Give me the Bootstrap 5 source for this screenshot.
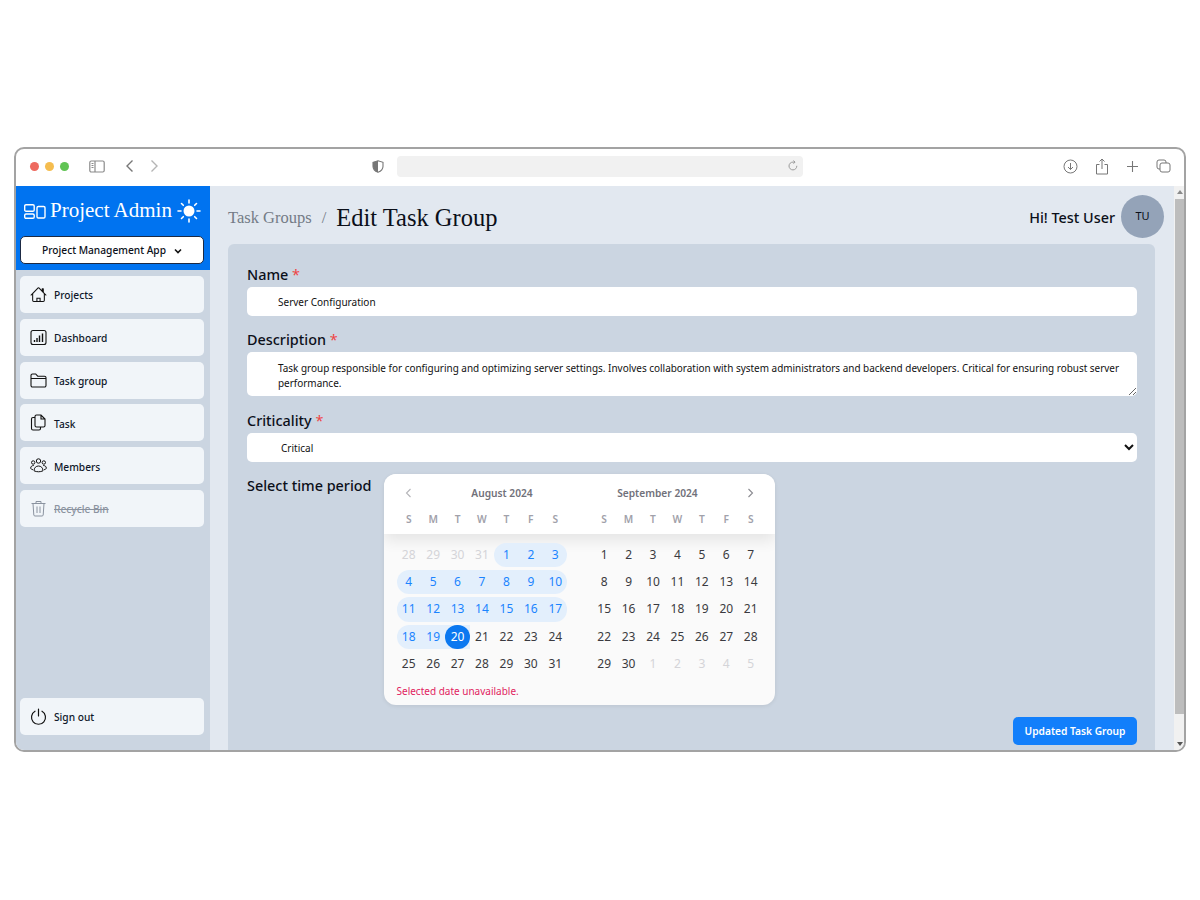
<!doctype html>
<html lang="en">
<head>
<meta charset="utf-8">
<title>Edit Task Group</title>
<link rel="stylesheet" href="https://cdn.jsdelivr.net/npm/bootstrap@5.3.0/dist/css/bootstrap.min.css">
<style>
html,body{height:100%;background:#fff;overflow:hidden}
body{font-family:"Noto Sans",Roboto,sans-serif;color:#0b0f19}
.frame{width:1172px;height:605px;margin:147px 0 0 14px;border:2px solid #a3a3a3;border-radius:10px;overflow:hidden;background:#fff}
.toolbar{height:37px;flex:none;padding:0 13px 3px 14px;color:#7a7a7a}
.dots{gap:6px}
.dots i{width:9px;height:9px;border-radius:50%;display:block}
.addr{width:406px;height:21px;background:#f1f1f1;border-radius:4px;margin-left:13px;padding-right:4px}
.tb1{margin-left:20px}.tb2{margin-left:20px}.tb3{margin-left:16px}.mid{margin-left:213px}
.app{flex:1;min-height:0}
.side{width:194px;background:#cbd5e1;flex:none}
.brand{height:84px;background:#0073f0;color:#fff;padding:0 4px}
.brand-row{height:50px;padding:0 4px;font:21px/1 "Liberation Serif",serif;white-space:nowrap}
.brand-row span{padding-bottom:2px}
.pick{height:28px;width:184px;background:#fff;color:#0b0f19;border:1px solid #1c2a44;border-radius:5px;font-size:10.200px;font-weight:500;padding-top:2px}
.navi{height:37px;background:#f1f5f9;border-radius:5px;font-size:10.200px;font-weight:500;padding-left:10px;gap:7px;color:#0f172a;width:184px}
.navi span{padding-top:3px}
.navi svg{flex:none}
.navlist{padding:6px 0 0 4px;gap:5.800px;height:465px}
.off{color:#8b93a0}.off span{text-decoration:line-through}
.mainp{background:#e2e8f0;flex:1;min-width:0;padding:0 19px 0 18px}
.topb{height:58px;padding-top:3px}
.crumb{font:16.500px/1 "Liberation Serif",serif;color:#747b86;padding-top:3px}
.sep{font:16.500px/1 "Liberation Serif",serif;color:#747b86;margin:0 10px;padding-top:3px}
.ttl{font:24.500px/1 "Liberation Serif",serif;color:#0b0f19;margin:0;padding-top:3px}
.hi{font-size:14.400px;font-weight:500;margin-right:6px;padding-top:3px}
.ava{width:43px;height:43px;border-radius:50%;background:#94a3b8;font-size:11px;margin-right:-9px}
.panel{background:#cbd5e1;border-radius:6px 6px 0 0;padding:20px 18px 0 19px;height:507px}
.lab{font-size:14.400px;font-weight:500;line-height:20px;padding-top:1px;margin-bottom:2px;display:block}
.lab b{color:#ef4444;font-weight:400}
.fld{display:block;width:100%;background:#fff;border:0;border-radius:5px;font-size:10px;color:#111;padding:0 0 0 31px;height:29px;margin-bottom:13px;outline:0}
textarea.fld{height:44px;padding:9px 14px 0 31px;line-height:15px;margin-bottom:14px;font-size:9.950px}
select.fld{padding-left:30px;margin-bottom:12px}
.tp{font-size:14.400px;font-weight:500;width:137px;line-height:20px;padding-top:2px}
.cal{width:391px;height:231px;background:#fafafa;border-radius:12px;box-shadow:0 1px 4px rgba(0,0,0,.08);overflow:hidden}
.calh{height:60px;background:#fff;box-shadow:0 6px 14px rgba(0,0,0,.09);position:relative;padding:0 12.500px;gap:24.500px}
.mon{width:171px;position:relative}
.mt{height:39px;font-size:10.200px;font-weight:600;color:#71717a}
.mt1{padding-left:40px}.mt2{padding-right:40px}
.arr{position:absolute;top:14px;color:#b4b4b8}
.gr{display:grid;grid-template-columns:repeat(7,24.430px);text-align:center}
.wd{font-size:10.200px;font-weight:600;color:#a1a1aa;line-height:15px;margin-top:-1px}
.calb{padding:8.500px 12.500px 0;gap:24.500px}
.dc{height:24.400px;margin-bottom:3px;font-size:12px;line-height:24.400px;color:#3a3a40}
.mute{color:#d4d4d8}
.rg{background:#e3effc;color:#1b84ff}
.rs{border-radius:12px 0 0 12px}.re{border-radius:0 12px 12px 0}
.sel{background:#e3effc;border-radius:0}
.sel span{display:block;height:24.400px;background:#0b78f0;color:#fff;border-radius:50%}
.err{font-size:10px;color:#e11d5f;padding:5px 0 0 12.500px;line-height:14px}
.sub{height:28px;width:124px;background:#127ffb;color:#fff;border:0;border-radius:5px;font-size:10.200px;font-weight:600;white-space:nowrap;padding-top:3px}
.scr{width:10px;flex:none;background:#f1f1f1;position:relative}
.scr:before{content:"";position:absolute;left:1px;right:0;top:13px;bottom:36px;background:#bdbdbd}
.scr i{position:absolute;left:3px;border-left:3px solid transparent;border-right:3px solid transparent}
</style>
</head>
<body>
<div class="frame d-flex flex-column">
  <div class="toolbar d-flex align-items-center">
    <div class="dots d-flex">
      <i style="background:#ee6a5f"></i><i style="background:#f5bd4f"></i><i style="background:#61c454"></i>
    </div>
    <svg class="tb1" width="16" height="13" viewBox="0 0 16 13" fill="none" stroke="#8a8a8a" stroke-width="1.2"><rect x=".8" y="1" width="14.4" height="11" rx="1.5"/><path d="M6 1v11M2.500 3.500h2M2.500 5.500h2M2.500 7.500h2"/></svg>
    <svg class="tb2" width="9" height="14" viewBox="0 0 9 14" fill="none" stroke="#777" stroke-width="1.400"><path d="M7.500 1.500 2 7l5.500 5.500"/></svg>
    <svg class="tb3" width="9" height="14" viewBox="0 0 9 14" fill="none" stroke="#b5b5b5" stroke-width="1.400"><path d="M1.500 1.500 7 7l-5.500 5.500"/></svg>
    <svg class="mid" width="12" height="13" viewBox="0 0 12 13"><path d="M6 .8 11 2.300v4C11 9.500 8.800 11.400 6 12.300 3.200 11.400 1 9.500 1 6.300v-4z" fill="#fff" stroke="#777" stroke-width="1.100"/><path d="M6 .8V12.300C3.200 11.400 1 9.500 1 6.300v-4z" fill="#777"/></svg>
    <div class="addr d-flex align-items-center justify-content-end">
      <svg width="12" height="12" viewBox="0 0 12 12" fill="none" stroke="#9a9a9a" stroke-width="1"><path d="M9.800 5.800A3.900 3.900 0 1 1 6 2.100h2M6.500.5 8 2.100 6.500 3.700"/></svg>
    </div>
    <div class="ms-auto d-flex align-items-center" style="gap:17px">
      <svg width="15" height="15" viewBox="0 0 15 15" fill="none" stroke="#777" stroke-width="1"><circle cx="7.500" cy="7.500" r="6.500"/><path d="M7.500 4v6.500M5 8l2.500 2.500L10 8"/></svg>
      <svg width="14" height="17" viewBox="0 0 14 17" fill="none" stroke="#777" stroke-width="1"><path d="M4.500 6.500H1.500v9.500h11V6.500h-3M7 11V1M4.500 3.500 7 1l2.500 2.500"/></svg>
      <svg width="13" height="13" viewBox="0 0 13 13" fill="none" stroke="#777" stroke-width="1.100"><path d="M6.500 1v11M1 6.500h11"/></svg>
      <svg width="15" height="14" viewBox="0 0 15 14" fill="none" stroke="#777" stroke-width="1"><rect x="4" y="4" width="10" height="9" rx="2"/><path d="M4 10H3a2 2 0 0 1-2-2V3a2 2 0 0 1 2-2h5a2 2 0 0 1 2 2v1"/></svg>
    </div>
  </div>
  <div class="app d-flex">
    <aside class="side d-flex flex-column">
      <div class="brand">
        <div class="brand-row d-flex align-items-center">
          <svg class="flex-shrink-0" width="22" height="15" viewBox="0 0 22 15" fill="none" stroke="#fff" stroke-width="1.400" style="margin-right:4px"><rect x=".7" y=".7" width="9.500" height="6.500" rx="1.300"/><rect x=".7" y="10" width="9.500" height="4.300" rx="1.300"/><rect x="13" y="2.500" width="8" height="11.500" rx="1.300"/></svg>
          <span>Project Admin</span>
          <svg class="ms-auto flex-shrink-0" width="24" height="24" viewBox="0 0 24 24" fill="none" stroke="#fff" stroke-width="1.600" stroke-linecap="round" style="margin-right:1px"><circle cx="12" cy="12" r="5.500" fill="#fff" stroke="none"/><path d="M12 1v3M12 20v3M1 12h3M20 12h3M4.500 4.500l1.800 1.800M17.700 17.700l1.800 1.800M4.500 19.500l1.800-1.800M17.700 6.300l1.800-1.800"/></svg>
        </div>
        <button class="pick d-flex align-items-center justify-content-center gap-2" type="button">Project Management App
          <svg width="8" height="6" viewBox="0 0 8 6" fill="none" stroke="#111" stroke-width="1.600"><path d="M1 1.500 4 4.500 7 1.500"/></svg>
        </button>
      </div>
      <nav class="navlist d-flex flex-column">
        <a class="navi d-flex align-items-center text-decoration-none"><svg width="17" height="17" viewBox="0 0 16 16" fill="#111"><path d="M8.707 1.500a1 1 0 0 0-1.414 0L.646 8.146a.5.500 0 0 0 .708.708L2 8.207V13.500A1.500 1.500 0 0 0 3.500 15h9a1.500 1.500 0 0 0 1.500-1.500V8.207l.646.647a.5.500 0 0 0 .708-.708L13 5.793V2.500a.5.500 0 0 0-.5-.5h-1a.5.500 0 0 0-.5.500v1.293L8.707 1.500ZM13 7.207V13.500a.5.500 0 0 1-.5.500h-9a.5.500 0 0 1-.5-.5V7.207l5-5 5 5ZM6 11h4v3H9v-2H7v2H6z"/></svg><span>Projects</span></a>
        <a class="navi d-flex align-items-center text-decoration-none"><svg width="17" height="17" viewBox="0 0 17 17" fill="none" stroke="#111" stroke-width="1.100"><rect x="1" y="1.500" width="15" height="14" rx="2"/><path stroke-width="1.400" d="M4.500 13v-2M7 13V9M9.500 13V6.500M12.500 13V4.500"/></svg><span>Dashboard</span></a>
        <a class="navi d-flex align-items-center text-decoration-none"><svg width="17" height="15" viewBox="0 0 17 15" fill="none" stroke="#111" stroke-width="1.100"><path d="M1 12.500V2.500A1.500 1.500 0 0 1 2.500 1h3.200l2 2.200h6.800A1.500 1.500 0 0 1 16 4.700v7.800a1.500 1.500 0 0 1-1.500 1.500h-12A1.500 1.500 0 0 1 1 12.500ZM1 5.500h15"/></svg><span>Task group</span></a>
        <a class="navi d-flex align-items-center text-decoration-none"><svg width="17" height="17" viewBox="0 0 17 17" fill="none" stroke="#111" stroke-width="1.100"><path d="M5 3.500H3A1.500 1.500 0 0 0 1.500 5v9.500A1.500 1.500 0 0 0 3 16h6a1.500 1.500 0 0 0 1.500-1.500V13"/><path d="M5 2.500A1.500 1.500 0 0 1 6.500 1H11l4 4v6.500a1.500 1.500 0 0 1-1.500 1.500h-7A1.500 1.500 0 0 1 5 11.500ZM11 1v4h4"/></svg><span>Task</span></a>
        <a class="navi d-flex align-items-center text-decoration-none"><svg width="17" height="15" viewBox="0 0 17 15" fill="none" stroke="#111" stroke-width="1"><circle cx="8.500" cy="3" r="2.200"/><circle cx="3.200" cy="4.500" r="1.700"/><circle cx="13.800" cy="4.500" r="1.700"/><path d="M4 12.800c0-3 2-4.800 4.500-4.800s4.500 1.800 4.500 4.800c-3 1.300-6 1.300-9 0ZM3.800 7.500C2 7.500.7 8.500.7 10c0 1 1 1.500 2.300 1.700M13.200 7.500c1.800 0 3.100 1 3.100 2.500 0 1-1 1.500-2.300 1.700"/></svg><span>Members</span></a>
        <a class="navi off d-flex align-items-center text-decoration-none"><svg width="17" height="17" viewBox="0 0 17 17" fill="none" stroke="#8b93a0" stroke-width="1"><path d="M1.500 3.500h14M6 3.500V1.500h5v2M3 3.500l.8 11.500a1.200 1.200 0 0 0 1.200 1h7a1.200 1.200 0 0 0 1.200-1l.8-11.500M7 6.500v6.500M10 6.500v6.500"/></svg><span>Recycle Bin</span></a>
        <a class="navi d-flex align-items-center text-decoration-none mt-auto"><svg width="17" height="17" viewBox="0 0 17 17" fill="none" stroke="#111" stroke-width="1.200" stroke-linecap="round"><path d="M8.500 1v7M5 3.200a7 7 0 1 0 7 0"/></svg><span>Sign out</span></a>
      </nav>
    </aside>
    <main class="mainp">
      <div class="topb d-flex align-items-center">
        <span class="crumb">Task Groups</span><span class="sep">/</span><h1 class="ttl">Edit Task Group</h1>
        <span class="hi ms-auto">Hi! Test User</span>
        <span class="ava d-flex align-items-center justify-content-center">TU</span>
      </div>
      <form class="panel">
        <label class="lab">Name <b>*</b></label>
        <input class="fld" type="text" value="Server Configuration">
        <label class="lab">Description <b>*</b></label>
        <textarea class="fld">Task group responsible for configuring and optimizing server settings. Involves collaboration with system administrators and backend developers. Critical for ensuring robust server performance.</textarea>
        <label class="lab">Criticality <b>*</b></label>
        <select class="fld"><option>Critical</option></select>
        <div class="d-flex">
          <div class="tp">Select time period</div>
          <div class="cal">
            <div class="calh d-flex">
              <div class="mon">
                <svg class="arr" style="left:8px" width="7" height="10" viewBox="0 0 7 10" fill="none" stroke="currentColor" stroke-width="1.100"><path d="M5.500 1 1.500 5l4 4"/></svg>
                <div class="mt mt1 d-flex align-items-center justify-content-center">August 2024</div>
                <div class="gr wd"><span>S</span><span>M</span><span>T</span><span>W</span><span>T</span><span>F</span><span>S</span></div>
              </div>
              <div class="mon">
                <svg class="arr" style="right:9px;color:#8a8a90" width="7" height="10" viewBox="0 0 7 10" fill="none" stroke="currentColor" stroke-width="1.100"><path d="M1.500 1l4 4-4 4"/></svg>
                <div class="mt mt2 d-flex align-items-center justify-content-center">September 2024</div>
                <div class="gr wd"><span>S</span><span>M</span><span>T</span><span>W</span><span>T</span><span>F</span><span>S</span></div>
              </div>
            </div>
            <div class="calb d-flex">
              <div class="gr mon">
                <span class="dc mute">28</span><span class="dc mute">29</span><span class="dc mute">30</span><span class="dc mute">31</span><span class="dc rg rs">1</span><span class="dc rg">2</span><span class="dc rg re">3</span>
                <span class="dc rg rs">4</span><span class="dc rg">5</span><span class="dc rg">6</span><span class="dc rg">7</span><span class="dc rg">8</span><span class="dc rg">9</span><span class="dc rg re">10</span>
                <span class="dc rg rs">11</span><span class="dc rg">12</span><span class="dc rg">13</span><span class="dc rg">14</span><span class="dc rg">15</span><span class="dc rg">16</span><span class="dc rg re">17</span>
                <span class="dc rg rs">18</span><span class="dc rg">19</span><span class="dc sel"><span>20</span></span><span class="dc">21</span><span class="dc">22</span><span class="dc">23</span><span class="dc">24</span>
                <span class="dc">25</span><span class="dc">26</span><span class="dc">27</span><span class="dc">28</span><span class="dc">29</span><span class="dc">30</span><span class="dc">31</span>
              </div>
              <div class="gr mon">
                <span class="dc">1</span><span class="dc">2</span><span class="dc">3</span><span class="dc">4</span><span class="dc">5</span><span class="dc">6</span><span class="dc">7</span>
                <span class="dc">8</span><span class="dc">9</span><span class="dc">10</span><span class="dc">11</span><span class="dc">12</span><span class="dc">13</span><span class="dc">14</span>
                <span class="dc">15</span><span class="dc">16</span><span class="dc">17</span><span class="dc">18</span><span class="dc">19</span><span class="dc">20</span><span class="dc">21</span>
                <span class="dc">22</span><span class="dc">23</span><span class="dc">24</span><span class="dc">25</span><span class="dc">26</span><span class="dc">27</span><span class="dc">28</span>
                <span class="dc">29</span><span class="dc">30</span><span class="dc mute">1</span><span class="dc mute">2</span><span class="dc mute">3</span><span class="dc mute">4</span><span class="dc mute">5</span>
              </div>
            </div>
            <div class="err">Selected date unavailable.</div>
          </div>
        </div>
        <div class="d-flex justify-content-end" style="margin-top:12px"><button class="sub" type="button">Updated Task Group</button></div>
      </form>
    </main>
    <div class="scr"><i style="top:4px;border-bottom:4px solid #8a8a8a"></i><i style="bottom:4px;border-top:4px solid #555"></i></div>
  </div>
</div>
</body>
</html>
